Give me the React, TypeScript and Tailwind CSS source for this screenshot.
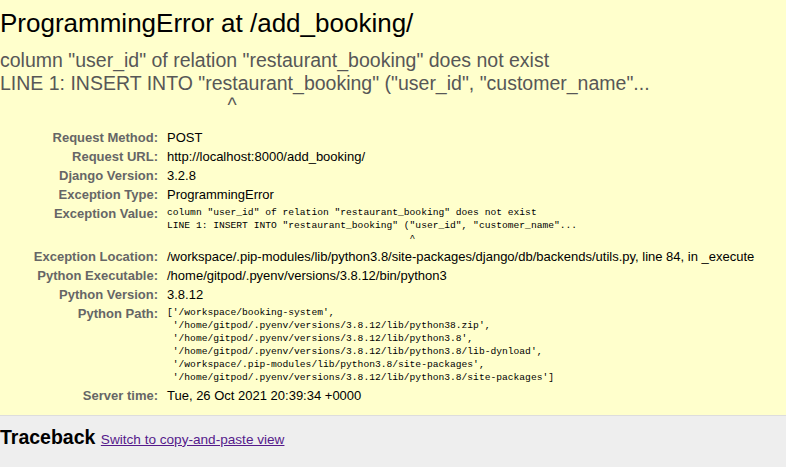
const sans = "font-['Liberation_Sans',Arial,sans-serif]";
const mono = "font-['Liberation_Mono','DejaVu_Sans_Mono',monospace]";

const caretPad = ' '.repeat(42);

const exceptionValue =
  'column "user_id" of relation "restaurant_booking" does not exist\n' +
  'LINE 1: INSERT INTO "restaurant_booking" ("user_id", "customer_name"...\n' +
  caretPad +
  '^';

const pythonPath = [
  "['/workspace/booking-system',",
  " '/home/gitpod/.pyenv/versions/3.8.12/lib/python38.zip',",
  " '/home/gitpod/.pyenv/versions/3.8.12/lib/python3.8',",
  " '/home/gitpod/.pyenv/versions/3.8.12/lib/python3.8/lib-dynload',",
  " '/workspace/.pip-modules/lib/python3.8/site-packages',",
  " '/home/gitpod/.pyenv/versions/3.8.12/lib/python3.8/site-packages']",
].join('\n');

type Row = { label: string; value: string; pre?: boolean };

const rows: Row[] = [
  { label: 'Request Method:', value: 'POST' },
  { label: 'Request URL:', value: 'http://localhost:8000/add_booking/' },
  { label: 'Django Version:', value: '3.2.8' },
  { label: 'Exception Type:', value: 'ProgrammingError' },
  { label: 'Exception Value:', value: exceptionValue, pre: true },
  {
    label: 'Exception Location:',
    value:
      '/workspace/.pip-modules/lib/python3.8/site-packages/django/db/backends/utils.py, line 84, in _execute',
  },
  { label: 'Python Executable:', value: '/home/gitpod/.pyenv/versions/3.8.12/bin/python3' },
  { label: 'Python Version:', value: '3.8.12' },
  { label: 'Python Path:', value: pythonPath, pre: true },
  { label: 'Server time:', value: 'Tue, 26 Oct 2021 20:39:34 +0000' },
];

function MetaRow({ row }: { row: Row }) {
  return (
    <div className="flex py-[2px]">
      <div className="w-[158px] shrink-0 text-right font-bold text-[#666] text-[13px] leading-[15px] whitespace-nowrap">
        {row.label}
      </div>
      {row.pre ? (
        <pre className={`${mono} pl-[9px] m-0 text-[9.65px] leading-[13px] text-black whitespace-pre`}>
          {row.value}
        </pre>
      ) : (
        <div className="pl-[9px] text-[13px] leading-[15px] text-black whitespace-nowrap">{row.value}</div>
      )}
    </div>
  );
}

export default function App() {
  return (
    <div className={`${sans} h-screen flex flex-col bg-white overflow-hidden`}>
      {/* summary */}
      <div className="bg-[#ffc] border-b border-[#ddd] pt-[8px] pb-[10px]">
        <h1 className="text-[26px] leading-[30px] font-normal text-black whitespace-nowrap">
          ProgrammingError at /add_booking/
        </h1>
        <pre className={`${sans} mt-[11px] text-[19.5px] leading-[22.5px] text-[#575757] whitespace-pre`}>
          {exceptionValue}
        </pre>
        <div className="mt-[11px]">
          {rows.map((r) => (
            <MetaRow key={r.label} row={r} />
          ))}
        </div>
      </div>

      {/* traceback */}
      <div className="flex-1 bg-[#eee] pt-[10px]">
        <h2 className="text-[19.5px] leading-[22.5px] font-bold text-black whitespace-nowrap">
          Traceback{' '}
          <span className="text-[13.6px] font-normal">
            <a href="#" className="text-[#551a8b] underline">
              Switch to copy-and-paste view
            </a>
          </span>
        </h2>
      </div>
    </div>
  );
}
